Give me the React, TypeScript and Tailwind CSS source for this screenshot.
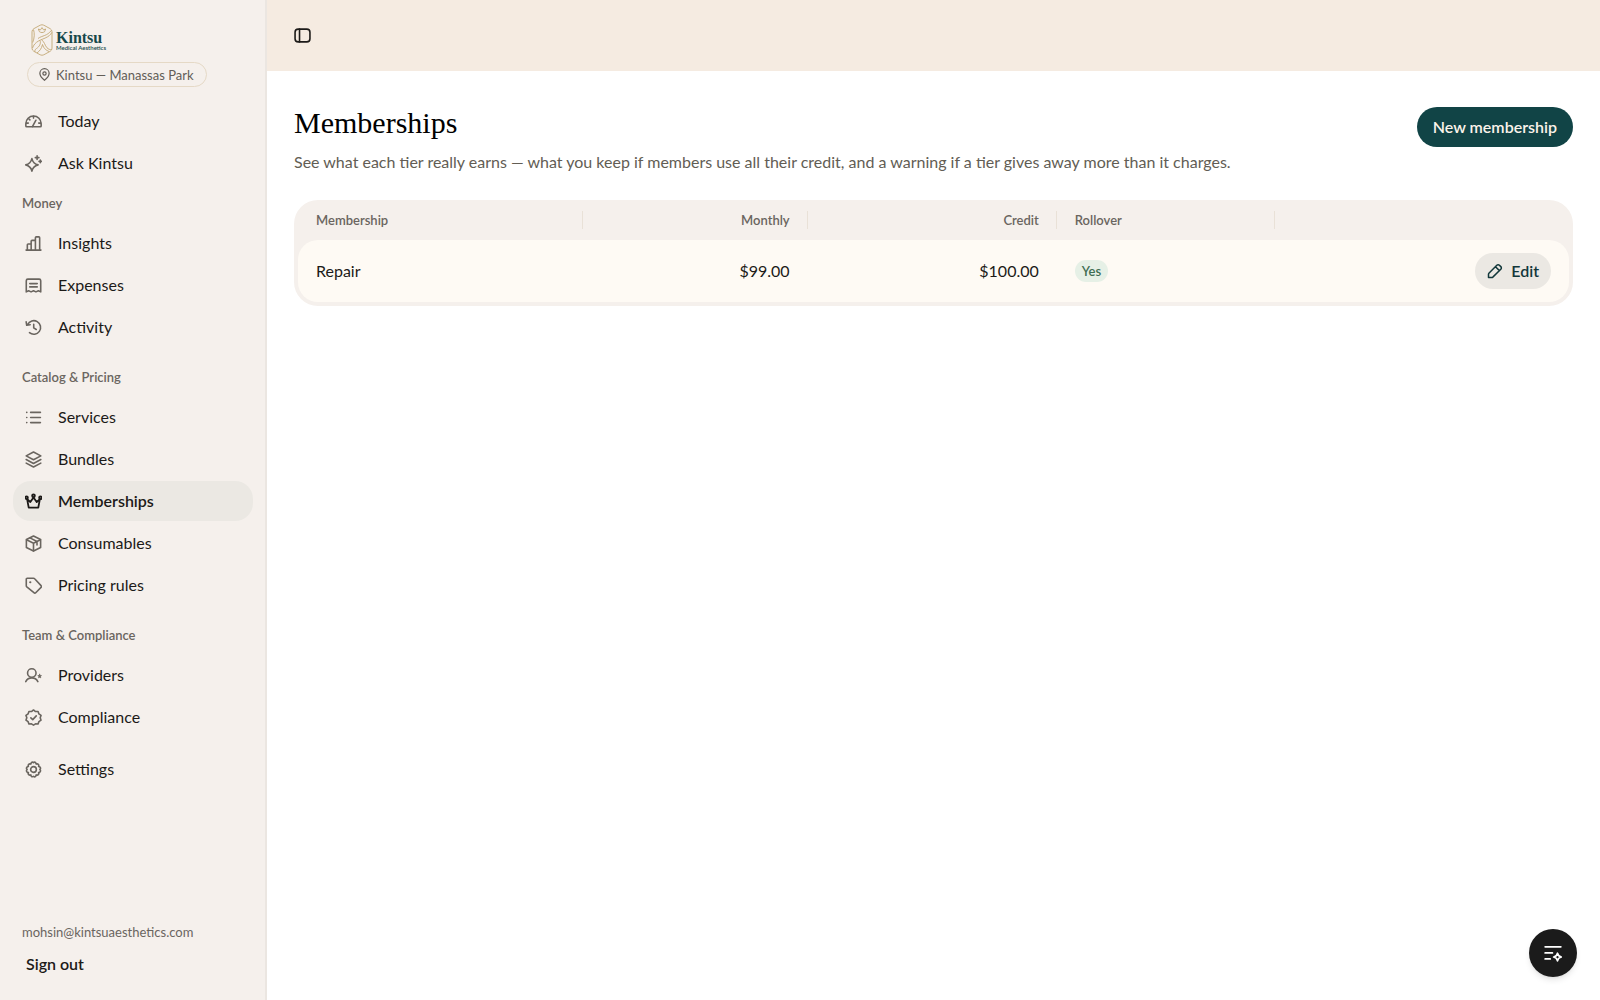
import type { ReactNode } from 'react'

interface NavEntry {
  label: string
  icon: ReactNode
  active?: boolean
}

interface Membership {
  name: string
  monthly: string
  credit: string
  rollover: boolean
}

function Icon({ children, className = 'h-[17px] w-[17px]' }: { children: ReactNode; className?: string }) {
  return (
    <svg
      viewBox="0 0 16 16"
      fill="none"
      stroke="currentColor"
      strokeWidth={1.5}
      strokeLinecap="round"
      strokeLinejoin="round"
      className={`shrink-0 ${className}`}
      aria-hidden="true"
    >
      {children}
    </svg>
  )
}

const topNav: NavEntry[] = [
  {
    label: 'Today',
    icon: (
      <Icon>
        <path d="M.8 12.2V10a7.2 7.2 0 0 1 14.4 0v2.2a.8.8 0 0 1-.8.8H1.6a.8.8 0 0 1-.8-.8Z" />
        <path d="M7 12.8 10.3 6.800M8 3v1.800M1.200 9.500h1.900M12.900 9.500h1.900M3.700 5.600l.9.9" />
      </Icon>
    ),
  },
  {
    label: 'Ask Kintsu',
    icon: (
      <Icon>
        <path d="M6.500 3.400c.8 3.600 2.200 5 5.800 5.900-3.600.9-5 2.200-5.800 5.900C5.600 11.500 4.300 10.200.7 9.300c3.600-.9 4.900-2.300 5.800-5.900Z" />
        <path d="M11.400.8v3.400M9.700 2.500h3.400M14.400 4.800v2.400M13.200 6h2.400" />
      </Icon>
    ),
  },
]

const sections: { title: string; items: NavEntry[] }[] = [
  {
    title: 'Money',
    items: [
      {
        label: 'Insights',
        icon: (
          <Icon>
            <path d="M1 14.200h14M2.200 14V9.200a.8.8 0 0 1 .8-.8h2.600M5.800 14V5.900a.8.8 0 0 1 .8-.8h2.800M9.800 14V2.600a.8.8 0 0 1 .8-.8h2.400a.8.8 0 0 1 .8.800V14" />
          </Icon>
        ),
      },
      {
        label: 'Expenses',
        icon: (
          <Icon>
            <path d="M1.200 14V3.500A1.500 1.500 0 0 1 2.700 2h10.600a1.500 1.500 0 0 1 1.500 1.500V14l-2.200-1-2.300 1L8 13l-2.300 1-2.300-1-2.200 1Z" />
            <path d="M4.500 6.200h7M4.500 9.300h7" />
          </Icon>
        ),
      },
      {
        label: 'Activity',
        icon: (
          <Icon>
            <path d="M4.200 12.900A6.400 6.400 0 1 0 2.500 5.200M1.100 2.600l.5 3.300 3.300-.5M8.200 4.900V8.400l2.400 1.500" />
          </Icon>
        ),
      },
    ],
  },
  {
    title: 'Catalog & Pricing',
    items: [
      {
        label: 'Services',
        icon: (
          <Icon>
            <path d="M5.300 3.200h9.200M5.300 8h9.200M5.300 12.800h9.200M1.600 3.200h.1M1.600 8h.1M1.600 12.800h.1" />
          </Icon>
        ),
      },
      {
        label: 'Bundles',
        icon: (
          <Icon>
            <path d="M8 .9 14.900 4.600 8 8.300 1.100 4.600 8 .9Z" />
            <path d="M1.100 8 8 11.700 14.900 8M1.100 11.400 8 15.100l6.900-3.700" />
          </Icon>
        ),
      },
      {
        label: 'Memberships',
        active: true,
        icon: (
          <Icon>
            <g strokeWidth={1.7}>
              <path d="m2 5.800 1.500 7.900h9L14 5.800 11 8.500 8 4.300 5 8.500 2 5.800Z" />
              <circle cx="8" cy="2.700" r="1.300" />
              <circle cx="1.500" cy="4.500" r="1.200" />
              <circle cx="14.500" cy="4.500" r="1.200" />
            </g>
          </Icon>
        ),
      },
      {
        label: 'Consumables',
        icon: (
          <Icon>
            <path d="M8 .9 14.700 4.300v7.400L8 15.100l-6.700-3.400V4.300L8 .9Z" />
            <path d="M1.500 4.500 8 7.800l6.500-3.300M8 7.800V15M4.700 2.700 11.300 6.100v3.200" />
          </Icon>
        ),
      },
      {
        label: 'Pricing rules',
        icon: (
          <Icon>
            <path d="M1.200 2A.8.8 0 0 1 2 1.200h6a1.500 1.500 0 0 1 1.100.5l6 6.400a1.200 1.200 0 0 1 0 1.700l-5 5a1.200 1.200 0 0 1-1.700 0L1.700 9.300a1.500 1.500 0 0 1-.5-1.100V2Z" />
            <path d="M4.900 4.900h.1" strokeWidth={2} />
          </Icon>
        ),
      },
    ],
  },
  {
    title: 'Team & Compliance',
    items: [
      {
        label: 'Providers',
        icon: (
          <Icon>
            <circle cx="6.400" cy="5.700" r="4" />
            <path d="M.7 13.700c1.100-2.100 2.900-3.500 5.700-3.500s4.600 1.400 5.700 3.500" />
            <path d="m13.800 6.900.5 1.100 1.200.1-.9.900.2 1.200-1-.6-1 .6.200-1.200-.9-.9 1.200-.1.500-1.100Z" fill="currentColor" strokeWidth={0.7} />
          </Icon>
        ),
      },
      {
        label: 'Compliance',
        icon: (
          <Icon>
            <path d="m8 .9 1.900 1.500 2.400-.1.800 2.300 2 1.400-.8 2.200.8 2.300-2 1.400-.8 2.200-2.400-.1L8 15.200 6.100 14l-2.400.1-.8-2.200-2-1.400.8-2.300L.9 6l2-1.400.8-2.300 2.400.1L8 .9Z" />
            <path d="m5.500 8.300 1.800 1.700 3.300-3.500" />
          </Icon>
        ),
      },
    ],
  },
]

const settingsEntry: NavEntry = {
  label: 'Settings',
  icon: (
    <Icon>
      <path d="M6.100 1.500c.5-.5 1.300-.5 1.900.1.600-.6 1.400-.6 1.900-.1.400.4.600.9.600 1.400.8-.3 1.500-.2 2 .3s.6 1.200.3 2c.5 0 1 .2 1.400.6.5.600.5 1.500-.2 2.200.7.700.7 1.600.2 2.200-.4.4-.9.6-1.400.6.3.8.2 1.500-.3 2s-1.200.6-2 .3c0 .5-.2 1-.6 1.400-.5.500-1.300.5-1.900-.1-.6.6-1.400.6-1.900.1-.4-.4-.6-.9-.6-1.400-.8.3-1.500.2-2-.3s-.6-1.200-.3-2c-.5 0-1-.2-1.400-.6-.5-.6-.5-1.500.2-2.200-.7-.7-.7-1.600-.2-2.200.4-.4.900-.6 1.400-.6-.3-.8-.2-1.500.3-2s1.200-.6 2-.3c0-.5.2-1 .6-1.400Z" />
      <circle cx="8" cy="8" r="2.700" />
    </Icon>
  ),
}

const memberships: Membership[] = [
  { name: 'Repair', monthly: '$99.00', credit: '$100.00', rollover: true },
]

function NavItem({ label, icon, active }: NavEntry) {
  return (
    <li>
      <a
        href="#"
        aria-current={active ? 'page' : undefined}
        className={`flex h-10 items-center gap-4 rounded-[18px] px-3 text-[16px] leading-5 text-[#1c1a18] ${
          active ? 'bg-[#ebe8e3] font-semibold' : ''
        }`}
      >
        <span className={active ? 'text-[#1c1a18]' : 'text-[#6a655f]'}>{icon}</span>
        {label}
      </a>
    </li>
  )
}

function Logo() {
  return (
    <div className="flex items-center gap-[3px] pl-1">
      <svg viewBox="0 0 22 32" fill="none" stroke="#c3a875" strokeWidth={0.9} className="h-8 w-[22px]" aria-hidden="true">
        <path d="M9.200 1.200a4 4 0 0 1 3.600 0l6.400 3.500A3.600 3.600 0 0 1 21 7.800v16.400a3.600 3.600 0 0 1-1.800 3.100l-6.400 3.500a4 4 0 0 1-3.600 0l-6.400-3.500A3.600 3.600 0 0 1 1 24.200V7.800a3.600 3.600 0 0 1 1.800-3.100l6.400-3.500Z" />
        <path d="M8.500 7.800 7.300 5l2.200.8L11 3.600l1.500 2.200 2.200-.8-1.200 2.800c-1.600 1-3.400 1-5 0Z" />
        <path d="M2.500 5.500c1.200 4 1 8.500-.8 13M20.800 8.500c-2.500 5-8.800 6-13.300 8.500-3 1.700-5 4-6 7M20.200 6.500c-3.700 5.500-9.200 5-13.200 8" />
        <path d="M10.500 15.800c3 1.700 3.200 5.500 5.500 8 1.300 1.400 3 2 4.500 1.800M9 16.500c1.200 3-.5 6-3.500 8-1.500 1-2 2.200-1.500 3.400M11.500 20.500c-1 4.500-3 6.500-5.500 8.500M11.500 20.500c1.500 4.500 3.500 5.500 6.500 7" />
      </svg>
      <div className="flex flex-col font-['Liberation_Serif',serif] text-[#17484a]">
        <span className="text-[16px] leading-4 font-bold">Kintsu</span>
        <span className="font-['Lato',sans-serif] text-[6px] leading-1 font-semibold">Medical Aesthetics</span>
      </div>
    </div>
  )
}

function Sidebar() {
  return (
    <aside className="flex w-[267px] shrink-0 flex-col border-r-2 border-[#ebe6e1] bg-[#f5f0ec] pt-6 pr-3 pb-[26px] pl-[13px]">
      <div className="flex flex-col items-start gap-1.5 px-3.5">
        <Logo />
        <div className="flex h-[25px] items-center gap-[5px] rounded-full border border-[#e5d9c6] pr-3 pl-2.5 text-[13px] leading-4 text-[#625d57]">
          <Icon className="h-[13px] w-[13px]">
            <path d="M8 15.200c3.600-2.800 5.700-5.600 5.700-8.600a5.700 5.700 0 0 0-11.400 0c0 3 2.100 5.800 5.700 8.600Z" />
            <circle cx="8" cy="6.700" r="2" />
          </Icon>
          Kintsu — Manassas Park
        </div>
      </div>

      <nav className="mt-3.5 flex flex-col" aria-label="Main">
        <ul className="flex flex-col gap-0.5">
          {topNav.map((item) => (
            <NavItem key={item.label} {...item} />
          ))}
        </ul>
        <div className="mt-2.5 flex flex-col gap-5">
          {sections.map((section) => (
            <section key={section.title}>
              <h2 className="mb-2.5 px-[9px] text-[13px] leading-5 font-semibold text-[#6a655f]">{section.title}</h2>
              <ul className="flex flex-col gap-0.5">
                {section.items.map((item) => (
                  <NavItem key={item.label} {...item} />
                ))}
              </ul>
            </section>
          ))}
        </div>
        <ul className="mt-3">
          <NavItem {...settingsEntry} />
        </ul>
      </nav>

      <div className="mt-auto flex flex-col items-start gap-3 px-[9px]">
        <p className="text-[13px] leading-5 text-[#6a655f]">mohsin@kintsuaesthetics.com</p>
        <button type="button" className="px-1 text-[16px] leading-5 font-semibold text-[#1c1a18]">
          Sign out
        </button>
      </div>
    </aside>
  )
}

function HeaderCell({ label, alignRight }: { label: string; alignRight?: boolean }) {
  return (
    <th scope="col" className={`relative h-10 px-[18px] font-semibold ${alignRight ? 'text-right' : 'text-left'}`}>
      {label}
      <span className="absolute inset-y-[11px] right-0 w-px bg-[#e9e1d7]" />
    </th>
  )
}

function MembershipsTable() {
  return (
    <div className="rounded-3xl bg-[#f5f0ec] px-1 pb-1">
      <table className="w-full table-fixed border-separate border-spacing-0">
        <colgroup>
          <col className="w-[22.4%]" />
          <col className="w-[17.7%]" />
          <col className="w-[19.6%]" />
          <col className="w-[17.2%]" />
          <col />
        </colgroup>
        <thead className="text-[13px] leading-5 text-[#6a655f]">
          <tr>
            <HeaderCell label="Membership" />
            <HeaderCell label="Monthly" alignRight />
            <HeaderCell label="Credit" alignRight />
            <HeaderCell label="Rollover" />
            <th scope="col" aria-label="Actions" />
          </tr>
        </thead>
        <tbody className="text-[16px] leading-5 text-[#1c1a18]">
          {memberships.map((membership) => (
            <tr key={membership.name} className="*:h-[62px] *:bg-[#fefaf4] *:px-[18px]">
              <td className="rounded-l-[20px]">{membership.name}</td>
              <td className="text-right">{membership.monthly}</td>
              <td className="text-right">{membership.credit}</td>
              <td>
                <span className="inline-flex h-[22px] items-center rounded-full bg-[#e6f0e6] px-[7px] text-[13px] font-semibold text-[#3e6d52]">
                  {membership.rollover ? 'Yes' : 'No'}
                </span>
              </td>
              <td className="rounded-r-[20px]">
                <div className="flex justify-end">
                  <button
                    type="button"
                    className="flex h-9 items-center gap-2 rounded-full bg-[#ebe8e3] px-3 text-[16px] font-semibold text-[#12373a]"
                  >
                    <Icon className="h-4 w-4">
                      <path d="M1.500 14.500v-3.300a1.500 1.500 0 0 1 .4-1l7.900-8a1.800 1.800 0 0 1 2.600 0l1.400 1.400a1.800 1.800 0 0 1 0 2.600l-8 7.900a1.500 1.500 0 0 1-1 .4H1.500ZM8.500 3.700l3.900 3.900" />
                    </Icon>
                    Edit
                  </button>
                </div>
              </td>
            </tr>
          ))}
        </tbody>
      </table>
    </div>
  )
}

export default function App() {
  return (
    <div className="flex min-h-screen bg-white font-['Lato','Noto_Sans',sans-serif] text-[#1c1a18]">
      <Sidebar />

      <div className="flex min-w-0 flex-1 flex-col">
        <header className="flex h-[71px] items-center bg-[#f5ebe1] px-[27px]">
          <button type="button" aria-label="Toggle sidebar">
            <Icon>
              <rect x="1" y="2" width="14" height="12" rx="3" />
              <path d="M5.200 2v12" />
            </Icon>
          </button>
        </header>

        <main className="flex flex-col gap-[26px] px-[27px] pt-9">
          <div className="flex items-start justify-between gap-6">
            <div>
              <h1 className="font-['Liberation_Serif',serif] text-[30px] leading-8 text-black">Memberships</h1>
              <p className="mt-[11px] text-[16px] leading-6 text-[#625d54]">
                See what each tier really earns — what you keep if members use all their credit, and a warning if a tier
                gives away more than it charges.
              </p>
            </div>
            <button
              type="button"
              className="h-10 shrink-0 rounded-full bg-[#114446] px-4 text-[16px] leading-5 font-semibold text-[#fbf3ea]"
            >
              New membership
            </button>
          </div>
          <MembershipsTable />
        </main>
      </div>

      <button
        type="button"
        aria-label="Open assistant"
        className="fixed right-[23px] bottom-[23px] flex size-12 items-center justify-center rounded-full bg-[#1b1b1b] text-white shadow-md"
      >
        <Icon className="h-[18px] w-[18px]">
          <path d="M1 2.500h14M1 7.900h6.500M1 13.300h4.500" />
          <path d="M12 8.200c.5 2.100 1.300 2.900 3.400 3.400-2.100.5-2.900 1.300-3.400 3.400-.5-2.100-1.300-2.900-3.400-3.400 2.100-.5 2.900-1.300 3.400-3.400Z" />
        </Icon>
      </button>
    </div>
  )
}
